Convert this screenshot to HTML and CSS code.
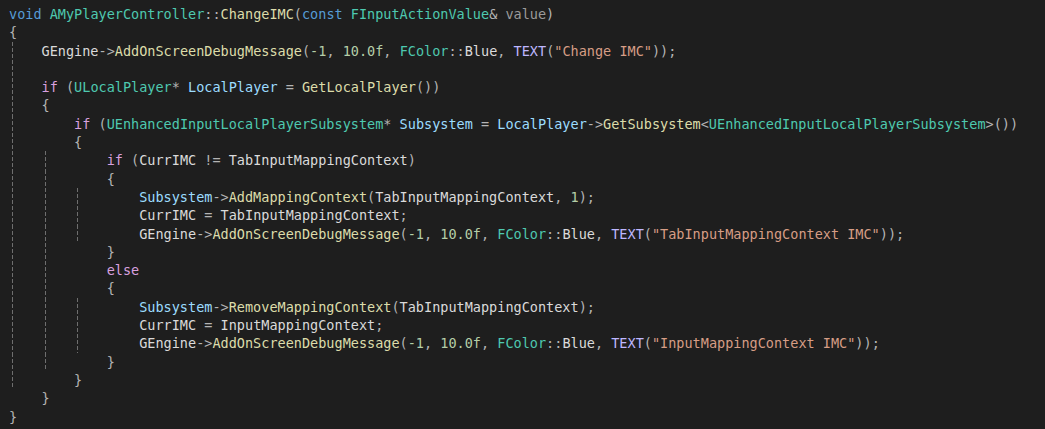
FILE: index.html
```html
<!DOCTYPE html>
<html>
<head>
<meta charset="utf-8">
<link rel="stylesheet" href="styles.css">
</head>
<body>
<div class="editor">
<div class="ln"><span class="code"><span class="k">void</span> <span class="t">AMyPlayerController</span><span class="p">::</span><span class="f">ChangeIMC</span><span class="p">(</span><span class="k">const</span> <span class="t">FInputActionValue</span><span class="p">&amp;</span> <span class="g">value</span><span class="p">)</span></span></div>
<div class="ln"><span class="code"><span class="p">{</span></span></div>
<div class="ln"><span class="ind gd"></span><span class="code"><span class="d">GEngine</span><span class="p">-&gt;</span><span class="f">AddOnScreenDebugMessage</span><span class="p">(</span><span class="n">-1</span><span class="p">,</span> <span class="n">10.0f</span><span class="p">,</span> <span class="t">FColor</span><span class="p">::</span><span class="d">Blue</span><span class="p">,</span> <span class="m">TEXT</span><span class="p">(</span><span class="s">"Change IMC"</span><span class="p">));</span></span></div>
<div class="ln"><span class="ind gd"></span></div>
<div class="ln"><span class="ind gd"></span><span class="code"><span class="c">if</span> <span class="p">(</span><span class="t">ULocalPlayer</span><span class="p">*</span> <span class="v">LocalPlayer</span> <span class="p">=</span> <span class="f">GetLocalPlayer</span><span class="p">())</span></span></div>
<div class="ln"><span class="ind gd"></span><span class="code"><span class="p">{</span></span></div>
<div class="ln"><span class="ind gd"></span><span class="ind"></span><span class="code"><span class="c">if</span> <span class="p">(</span><span class="t">UEnhancedInputLocalPlayerSubsystem</span><span class="p">*</span> <span class="v">Subsystem</span> <span class="p">=</span> <span class="v">LocalPlayer</span><span class="p">-&gt;</span><span class="f">GetSubsystem</span><span class="p">&lt;</span><span class="t">UEnhancedInputLocalPlayerSubsystem</span><span class="p">&gt;())</span></span></div>
<div class="ln"><span class="ind gd"></span><span class="ind"></span><span class="code"><span class="p">{</span></span></div>
<div class="ln"><span class="ind gd"></span><span class="ind gd"></span><span class="ind"></span><span class="code"><span class="c">if</span> <span class="p">(</span><span class="d">CurrIMC</span> <span class="p">!=</span> <span class="d">TabInputMappingContext</span><span class="p">)</span></span></div>
<div class="ln"><span class="ind gd"></span><span class="ind gd"></span><span class="ind"></span><span class="code"><span class="p">{</span></span></div>
<div class="ln"><span class="ind gd"></span><span class="ind gd"></span><span class="ind gd"></span><span class="ind"></span><span class="code"><span class="v">Subsystem</span><span class="p">-&gt;</span><span class="f">AddMappingContext</span><span class="p">(</span><span class="d">TabInputMappingContext</span><span class="p">,</span> <span class="n">1</span><span class="p">);</span></span></div>
<div class="ln"><span class="ind gd"></span><span class="ind gd"></span><span class="ind gd"></span><span class="ind"></span><span class="code"><span class="d">CurrIMC</span> <span class="p">=</span> <span class="d">TabInputMappingContext</span><span class="p">;</span></span></div>
<div class="ln"><span class="ind gd"></span><span class="ind gd"></span><span class="ind gd"></span><span class="ind"></span><span class="code"><span class="d">GEngine</span><span class="p">-&gt;</span><span class="f">AddOnScreenDebugMessage</span><span class="p">(</span><span class="n">-1</span><span class="p">,</span> <span class="n">10.0f</span><span class="p">,</span> <span class="t">FColor</span><span class="p">::</span><span class="d">Blue</span><span class="p">,</span> <span class="m">TEXT</span><span class="p">(</span><span class="s">"TabInputMappingContext IMC"</span><span class="p">));</span></span></div>
<div class="ln"><span class="ind gd"></span><span class="ind gd"></span><span class="ind"></span><span class="code"><span class="p">}</span></span></div>
<div class="ln"><span class="ind gd"></span><span class="ind gd"></span><span class="ind"></span><span class="code"><span class="c">else</span></span></div>
<div class="ln"><span class="ind gd"></span><span class="ind gd"></span><span class="ind"></span><span class="code"><span class="p">{</span></span></div>
<div class="ln"><span class="ind gd"></span><span class="ind gd"></span><span class="ind gd"></span><span class="ind"></span><span class="code"><span class="v">Subsystem</span><span class="p">-&gt;</span><span class="f">RemoveMappingContext</span><span class="p">(</span><span class="d">TabInputMappingContext</span><span class="p">);</span></span></div>
<div class="ln"><span class="ind gd"></span><span class="ind gd"></span><span class="ind gd"></span><span class="ind"></span><span class="code"><span class="d">CurrIMC</span> <span class="p">=</span> <span class="d">InputMappingContext</span><span class="p">;</span></span></div>
<div class="ln"><span class="ind gd"></span><span class="ind gd"></span><span class="ind gd"></span><span class="ind"></span><span class="code"><span class="d">GEngine</span><span class="p">-&gt;</span><span class="f">AddOnScreenDebugMessage</span><span class="p">(</span><span class="n">-1</span><span class="p">,</span> <span class="n">10.0f</span><span class="p">,</span> <span class="t">FColor</span><span class="p">::</span><span class="d">Blue</span><span class="p">,</span> <span class="m">TEXT</span><span class="p">(</span><span class="s">"InputMappingContext IMC"</span><span class="p">));</span></span></div>
<div class="ln"><span class="ind gd"></span><span class="ind gd"></span><span class="ind"></span><span class="code"><span class="p">}</span></span></div>
<div class="ln"><span class="ind gd"></span><span class="ind"></span><span class="code"><span class="p">}</span></span></div>
<div class="ln"><span class="ind"></span><span class="code"><span class="p">}</span></span></div>
<div class="ln"><span class="code"><span class="p">}</span></span></div>
</div>
</body>
</html>
```

FILE: styles.css
```css
html, body {
  margin: 0;
  padding: 0;
  background: #1e1e1e;
  height: 100%;
  overflow: hidden;
}

.editor {
  padding: 5px 0 0 9px;
  font-family: "DejaVu Sans Mono", "Liberation Mono", monospace;
  font-size: 13.52px;
  color: #dadada;
}

.ln {
  display: flex;
  height: 18.3px;
  line-height: 18.3px;
  white-space: pre;
}

.ind {
  flex: none;
  width: 4ch;
  height: 100%;
}

.ind.gd {
  background-image: repeating-linear-gradient(to bottom, #6e6e6e 0 4px, transparent 4px 6px);
  background-repeat: no-repeat;
  background-position: 3px 0;
  background-size: 1px 100%;
}

.code { white-space: pre; }

.k { color: #569cd6; }
.c { color: #d8a0df; }
.t { color: #4ec9b0; }
.f { color: #dcdcaa; }
.v { color: #9cdcfe; }
.p { color: #b4b4b4; }
.n { color: #b5cea8; }
.s { color: #d69d85; }
.m { color: #beb7ff; }
.g { color: #9a9a9a; }
.d { color: #dadada; }
```
